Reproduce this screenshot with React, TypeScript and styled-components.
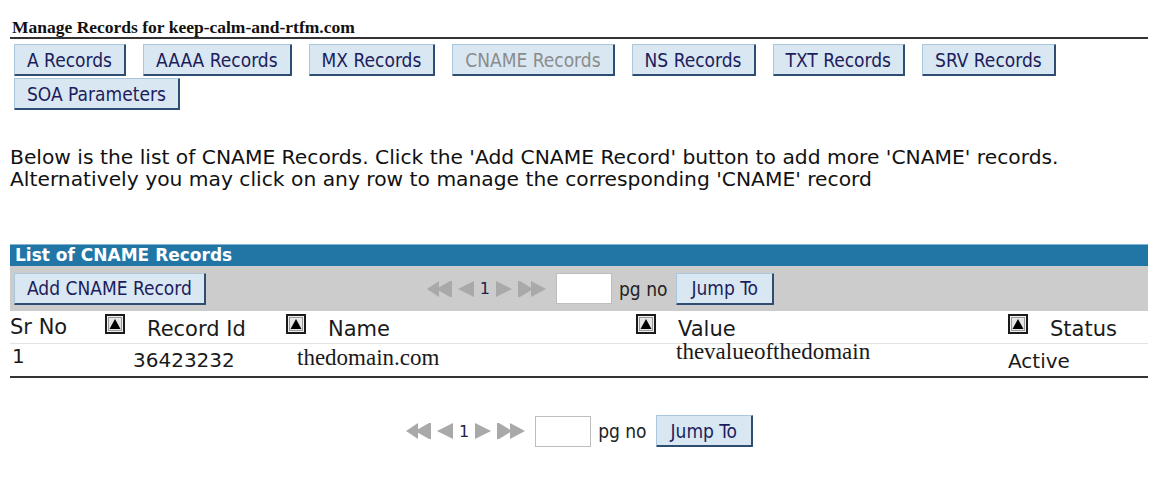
import React from "react";
import styled, { createGlobalStyle } from "styled-components";

const Global = createGlobalStyle`
  html, body { margin: 0; padding: 0; background: #ffffff; }
  body { font-family: "DejaVu Sans", Verdana, sans-serif; color: #111; }
`;

const Page = styled.div`
  width: 1138px;
  padding: 18px 8px 0 10px;
`;

const Title = styled.div`
  font-family: "Liberation Serif", "Times New Roman", serif;
  font-weight: bold;
  font-size: 17.5px;
  line-height: 18px;
  padding-left: 2px;
  padding-bottom: 1px;
  border-bottom: 2px solid #333;
`;

const TabBar = styled.div`
  display: flex;
  flex-wrap: wrap;
  column-gap: 17px;
  row-gap: 2px;
  padding: 5px 0 0 4px;
`;

const Btn = styled.button<{ $disabled?: boolean; $wide?: boolean }>`
  font-family: "DejaVu Sans Condensed", "DejaVu Sans", sans-serif;
  font-stretch: condensed;
  font-size: 19px;
  height: 32px;
  padding: 0 ${(p) => (p.$wide ? 14 : 12)}px;
  background: #d8e7f2;
  color: ${(p) => (p.$disabled ? "#8c8c8c" : "#1d1d5c")};
  border-style: solid;
  border-width: 1px 2px 2px 1px;
  border-color: #a9c6db #2e4d70 #2e4d70 #a9c6db;
  border-radius: 1px;
  cursor: pointer;
  white-space: nowrap;
`;

const Desc = styled.p`
  margin: 36px 0 0 0;
  font-size: 20.25px;
  line-height: 22px;
  color: #111;
`;

const Table = styled.div`
  margin-top: 54px;
  border-bottom: 2px solid #333;
`;

const Caption = styled.div`
  background: #2276a6;
  color: #fff;
  font-weight: bold;
  font-size: 17px;
  line-height: 21px;
  padding-left: 5px;
  border-top: 1px solid #7fb3d3;
`;

const Toolbar = styled.div`
  background: #cccccc;
  height: 45px;
  display: flex;
  align-items: center;
  padding-left: 4px;
`;

const PagerWrap = styled.div<{ $offset: number }>`
  display: flex;
  align-items: center;
  margin-left: ${(p) => p.$offset}px;
`;

const PageNum = styled.span`
  font-size: 16px;
  color: #22224a;
  margin: 0 5px;
`;

const PgInput = styled.input`
  width: 54px;
  height: 29px;
  box-sizing: content-box;
  padding: 0;
  margin-left: 9px;
  border: 1px solid #bdbdbd;
  background: #fff;
`;

const PgLabel = styled.span`
  font-family: "DejaVu Sans Condensed", "DejaVu Sans", sans-serif;
  font-stretch: condensed;
  font-size: 19px;
  color: #222;
  margin: 0 9px 0 7px;
`;

const Grid = styled.div`
  display: grid;
  grid-template-columns: 95px 181px 350px 372px 1fr;
`;

const HeadCell = styled.div`
  display: flex;
  align-items: flex-start;
  gap: 22px;
  height: 33px;
  box-sizing: border-box;
  padding-top: 3px;
  border-bottom: 1px solid #e4e4e4;
  white-space: nowrap;
`;

const HeadText = styled.span<{ $top?: number }>`
  font-size: 21px;
  line-height: 24px;
  color: #1a1a1a;
  padding-top: ${(p) => p.$top ?? 3}px;
`;

const Cell = styled.div<{ $pad?: number; $serif?: boolean; $top?: number; $lh?: string }>`
  height: 32px;
  padding-left: ${(p) => p.$pad ?? 0}px;
  padding-top: ${(p) => p.$top ?? 4}px;
  box-sizing: border-box;
  font-family: ${(p) =>
    p.$serif ? '"Liberation Serif", "Times New Roman", serif' : '"DejaVu Sans", sans-serif'};
  font-size: ${(p) => (p.$serif ? 23 : 20)}px;
  line-height: ${(p) => p.$lh ?? "normal"};
  color: #1a1a1a;
  white-space: nowrap;
`;

const BottomPager = styled.div`
  display: flex;
  justify-content: center;
  margin-top: 37px;
`;

const SortIcon = () => (
  <svg width="20" height="20" viewBox="0 0 20 20">
    <rect x="1" y="1" width="18" height="18" fill="#f0f0f0" stroke="#1a1a1a" strokeWidth="2" />
    <rect x="3.5" y="3.5" width="13" height="13" fill="#e6e6e6" stroke="#9a9a9a" strokeWidth="1" />
    <polygon points="10,5 15.5,15 4.5,15" fill="#000" />
  </svg>
);

const Arrow = ({ kind }: { kind: "first" | "prev" | "next" | "last" }) => {
  const c = "#a9a9a9";
  if (kind === "prev")
    return (
      <svg width="18" height="18" viewBox="0 0 18 18">
        <polygon points="1,9 17,1 17,17" fill={c} />
      </svg>
    );
  if (kind === "next")
    return (
      <svg width="18" height="18" viewBox="0 0 18 18">
        <polygon points="17,9 1,1 1,17" fill={c} />
      </svg>
    );
  if (kind === "first")
    return (
      <svg width="27" height="18" viewBox="0 0 27 18">
        <polygon points="1,9 13,1 13,17" fill={c} />
        <polygon points="10,9 24,1 24,17" fill={c} />
        <rect x="24" y="1" width="2" height="16" fill={c} />
      </svg>
    );
  return (
    <svg width="30" height="18" viewBox="0 0 30 18">
      <rect x="1" y="1" width="2" height="16" fill={c} />
      <polygon points="3,1 3,17 16,9" fill={c} />
      <polygon points="14,1 14,17 29,9" fill={c} />
    </svg>
  );
};

const ArrowGap = styled.span`
  display: inline-flex;
  margin-right: 4px;
`;

const Pager = ({ offset = 0 }: { offset?: number }) => (
  <PagerWrap $offset={offset}>
    <ArrowGap><Arrow kind="first" /></ArrowGap>
    <Arrow kind="prev" />
    <PageNum>1</PageNum>
    <ArrowGap><Arrow kind="next" /></ArrowGap>
    <Arrow kind="last" />
    <PgInput type="text" />
    <PgLabel>pg no</PgLabel>
    <Btn $wide>Jump To</Btn>
  </PagerWrap>
);

const tabs = [
  "A Records",
  "AAAA Records",
  "MX Records",
  "CNAME Records",
  "NS Records",
  "TXT Records",
  "SRV Records",
  "SOA Parameters",
];

export default function App() {
  return (
    <Page>
      <Global />
      <Title>Manage Records for keep-calm-and-rtfm.com</Title>
      <TabBar>
        {tabs.map((t) => (
          <Btn key={t} $disabled={t === "CNAME Records"}>
            {t}
          </Btn>
        ))}
      </TabBar>
      <Desc>
        Below is the list of CNAME Records. Click the 'Add CNAME Record' button to add more 'CNAME' records.
        <br />
        Alternatively you may click on any row to manage the corresponding 'CNAME' record
      </Desc>
      <Table>
        <Caption>List of CNAME Records</Caption>
        <Toolbar>
          <Btn>Add CNAME Record</Btn>
          <Pager offset={220} />
        </Toolbar>
        <Grid>
          <HeadCell>
            <HeadText $top={1}>Sr No</HeadText>
          </HeadCell>
          <HeadCell>
            <SortIcon />
            <HeadText>Record Id</HeadText>
          </HeadCell>
          <HeadCell>
            <SortIcon />
            <HeadText>Name</HeadText>
          </HeadCell>
          <HeadCell>
            <SortIcon />
            <HeadText>Value</HeadText>
          </HeadCell>
          <HeadCell>
            <SortIcon />
            <HeadText>Status</HeadText>
          </HeadCell>

          <Cell $pad={2} $top={0}>1</Cell>
          <Cell $pad={28} $top={4}>36423232</Cell>
          <Cell $pad={11} $top={1} $serif>thedomain.com</Cell>
          <Cell $pad={40} $top={0} $serif $lh="16px">thevalueofthedomain</Cell>
          <Cell $pad={0} $top={5}>Active</Cell>
        </Grid>
      </Table>
      <BottomPager>
        <Pager />
      </BottomPager>
    </Page>
  );
}
